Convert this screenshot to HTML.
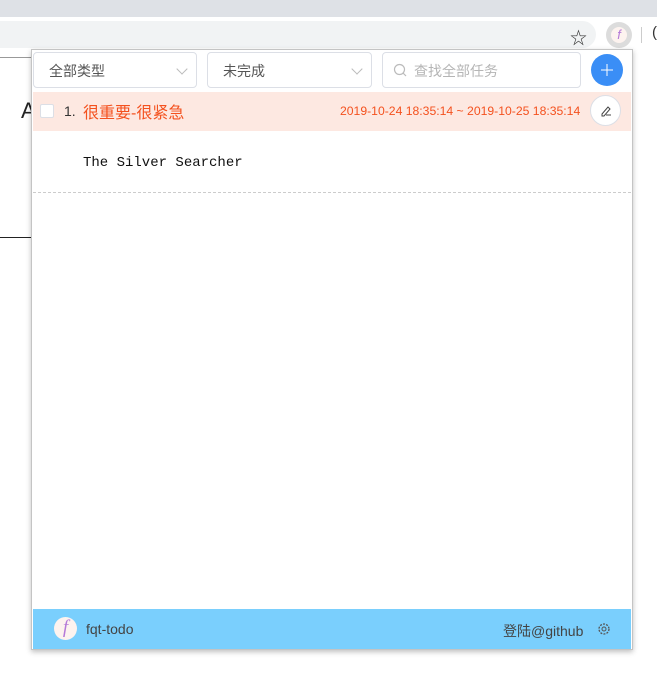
<!DOCTYPE html>
<html><head><meta charset="utf-8"><style>
*{margin:0;padding:0;box-sizing:border-box}
body{width:657px;height:685px;overflow:hidden;background:#fff;position:relative;font-family:"Liberation Sans","Noto Sans CJK SC",sans-serif}
.a{position:absolute}
.sel{position:absolute;top:52px;height:36px;border:1px solid #dcdfe6;border-radius:4px;background:#fff;font-size:14px;color:#555;padding:8px 0 0 15px}
.chev{position:absolute;right:10px;top:12px;width:8px;height:8px;border-right:1px solid #bbb;border-bottom:1px solid #bbb;transform:rotate(45deg)}
</style></head><body>
<div class="a" style="left:0;top:0;width:657px;height:17px;background:#dee1e6"></div>
<div class="a" style="left:0;top:21px;width:596px;height:27px;background:#f1f3f4;border-radius:0 14px 14px 0"></div>
<div class="a" style="left:570px;top:24px;font-size:17px;color:#333">☆</div>
<div class="a" style="left:606px;top:22px;width:26px;height:26px;border-radius:50%;background:#dcdcdc"></div>
<div class="a" style="left:611px;top:27px;width:16px;height:16px;border-radius:50%;background:#fdf3ef;color:#b57ad8;font-size:13px;font-style:italic;text-align:center;line-height:16px">f</div>
<div class="a" style="left:641px;top:27px;width:1px;height:16px;background:#ccc"></div>
<div class="a" style="left:652px;top:24px;font-size:15px;color:#333">(</div>
<div class="a" style="left:0;top:57px;width:31px;height:1px;background:#999"></div>
<div class="a" style="left:21px;top:98px;font-size:22px;color:#222">A</div>
<div class="a" style="left:0;top:237px;width:31px;height:1px;background:#222"></div>

<div class="a" style="left:31px;top:49px;width:602px;height:601px;border:1px solid #c4c4c4;background:#fff;box-shadow:0 2px 5px rgba(0,0,0,.25)"></div>
<div class="sel" style="left:33px;width:164px">全部类型<span class="chev"></span></div>
<div class="sel" style="left:207px;width:165px">未完成<span class="chev"></span></div>
<div class="sel" style="left:382px;width:199px;padding-left:31px;color:#b5b5b5">查找全部任务
<svg class="a" style="left:10px;top:10px" width="15" height="15"><circle cx="6.5" cy="6.5" r="5" fill="none" stroke="#bbb" stroke-width="1.2"/><path d="M10 10l3 3" stroke="#bbb" stroke-width="1.2"/></svg></div>
<div class="a" style="left:591px;top:54px;width:32px;height:32px;border-radius:50%;background:#3a8ef6"></div>
<svg class="a" style="left:599px;top:62px" width="16" height="16"><path d="M8 2v12M2 8h12" stroke="#fff" stroke-width="1"/></svg>
<div class="a" style="left:33px;top:92px;width:598px;height:39px;background:#fde8e1"></div>
<div class="a" style="left:40px;top:104px;width:14px;height:14px;border:1px solid #dcdfe6;background:#fff;border-radius:2px"></div>
<div class="a" style="left:64px;top:103px;font-size:14px;color:#333">1.</div>
<div class="a" style="left:83px;top:99px;font-size:16px;color:#f4511e">很重要-很紧急</div>
<div class="a" style="left:340px;top:104px;font-size:12.2px;color:#f4511e">2019-10-24 18:35:14 ~ 2019-10-25 18:35:14</div>
<div class="a" style="left:590px;top:95px;width:31px;height:31px;border-radius:50%;background:#fff;border:1px solid #dcdfe6"></div>
<svg class="a" style="left:598px;top:103px" width="16" height="16"><path d="M4 11l6-7 2 2-6 7H4z M8 12h5" fill="none" stroke="#444" stroke-width="1"/></svg>
<div class="a" style="left:83px;top:155px;font-family:'Liberation Mono',monospace;font-size:14px;color:#111">The Silver Searcher</div>
<div class="a" style="left:33px;top:192px;width:598px;border-top:1px dashed #ccc"></div>
<div class="a" style="left:33px;top:609px;width:598px;height:40px;background:#7acffd"></div>
<div class="a" style="left:54px;top:617px;width:23px;height:23px;border-radius:50%;background:#fdf3ef;color:#b57ad8;font-size:19px;font-style:italic;text-align:center;line-height:22px;font-family:'Liberation Serif',serif">f</div>
<div class="a" style="left:86px;top:621px;font-size:14px;color:#444">fqt-todo</div>
<div class="a" style="left:503px;top:621px;font-size:14px;color:#444">登陆@github</div>
<svg class="a" style="left:597px;top:622px" width="14" height="14"><circle cx="7" cy="7" r="5" fill="none" stroke="#555" stroke-width="1.3" stroke-dasharray="2 1.2"/><circle cx="7" cy="7" r="2" fill="none" stroke="#555"/></svg>
</body></html>
